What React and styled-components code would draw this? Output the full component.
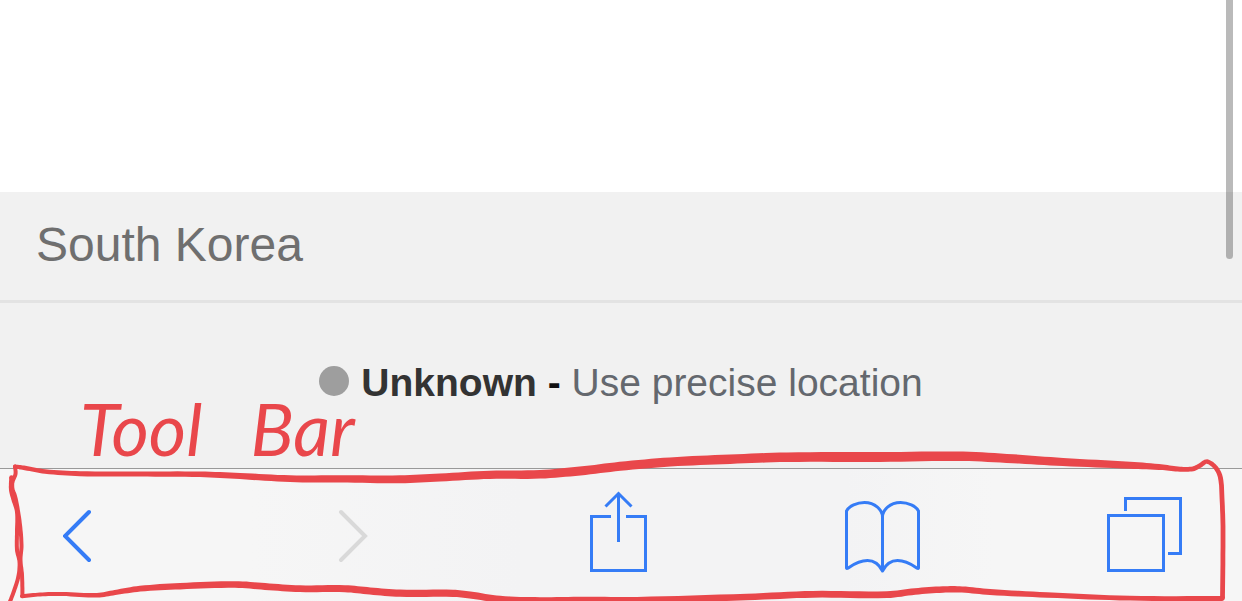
import React from "react";
import styled, { createGlobalStyle } from "styled-components";

const INK = "#e9474b";
const BLUE = "#357cf6";

const GlobalStyle = createGlobalStyle`
  *, *::before, *::after { box-sizing: border-box; }
  body {
    margin: 0;
    background: #fff;
    font-family: "Liberation Sans", Arial, Helvetica, sans-serif;
  }
`;

const Page = styled.div`
  position: relative;
  display: flex;
  flex-direction: column;
  min-height: 100vh;
  overflow: hidden;
`;

const Results = styled.main`
  flex: 1;
`;

const Footer = styled.footer`
  background: #f1f1f1;
`;

const Region = styled.div`
  padding: 25px 36px 27px;
  border-bottom: 3px solid #e3e3e3;
  color: #6f6f6f;
  font-size: 48px;
  line-height: 56px;
`;

const Location = styled.div`
  display: flex;
  align-items: center;
  justify-content: center;
  gap: 12px;
  padding: 56px 36px 61px;
  color: #111;
  font-size: 39px;
  line-height: 48px;
`;

const Dot = styled.span`
  width: 30px;
  height: 30px;
  margin-bottom: 4px;
  border-radius: 50%;
  background: #9e9e9e;
`;

const Place = styled.strong`
  color: #333;
`;

const PreciseLink = styled.a`
  color: #64686e;
  text-decoration: none;
`;

const Toolbar = styled.nav`
  display: grid;
  grid-template-columns: 275fr 252fr 255fr 262fr 76px;
  justify-items: start;
  padding: 22px 59px 28px 63px;
  border-top: 1px solid #999;
  background: linear-gradient(90deg, #f6f6f6 20%, #f3f3f4 42%, #f3f3f4 68%, #f6f6f6 80%);
`;

const ToolButton = styled.button`
  display: block;
  padding: 0;
  border: 0;
  background: none;
  color: ${(p) => (p.disabled ? "#d9d9d9" : BLUE)};
  cursor: ${(p) => (p.disabled ? "default" : "pointer")};

  svg {
    display: block;
    fill: none;
    stroke: currentColor;
    stroke-width: ${(p) => p.$weight || 3}px;
  }
`;

const ScrollThumb = styled.div`
  position: absolute;
  top: -8px;
  right: 9px;
  width: 7px;
  height: 267px;
  border-radius: 4px;
  background: rgba(0, 0, 0, 0.27);
`;

const InkFrame = styled.svg`
  position: absolute;
  left: 0;
  bottom: 0;
  width: 100%;
  height: 161px;
  fill: ${INK};
  pointer-events: none;
`;

const Note = styled.div`
  position: absolute;
  left: 80px;
  bottom: 133px;
  display: flex;
  gap: 48px;
  color: ${INK};
  font-family: Lato, sans-serif;
  font-size: 72px;
  font-style: italic;
  line-height: 80px;
  pointer-events: none;
`;

// Pen strokes as [x, y, thickness] samples.
const STROKES = [
  [
    [15, 26.5, 4], [25, 28, 4.5], [45, 31.5, 4.5], [80, 33.7, 5], [140, 34, 5.2],
    [200, 34.3, 5.6], [240, 36, 6.2], [290, 38.7, 6.8], [340, 38.8, 7.2], [400, 39.3, 8],
    [440, 37.5, 8], [490, 34.8, 8.2], [540, 34.3, 8.6], [580, 31, 8.8], [620, 26.3, 9],
    [670, 22, 9.2], [730, 19.2, 9.4], [787, 17.2, 9.6], [880, 17, 9.8], [963, 16.3, 9.4],
    [1013, 18.8, 9], [1063, 22, 8], [1130, 25.2, 7], [1163, 27.3, 5.6], [1180, 29.2, 5],
    [1193, 28.8, 4.8], [1200, 25.5, 4.6], [1207, 21.5, 4.4], [1216, 28, 4.6],
    [1220.5, 38, 4.8], [1222, 58, 4.8], [1223, 90, 4.8], [1222.500, 158, 4.8],
  ],
  [
    [22, 156.3, 4], [40, 154.500, 4], [62, 154, 4], [97, 155.3, 4.6], [115, 152.500, 5.2],
    [140, 148.7, 5.8], [180, 146.2, 6.4], [235, 144.5, 6.6], [265, 146.500, 6.8],
    [300, 148.7, 6.8], [345, 148.7, 7], [370, 151, 7.2], [400, 153.2, 7.2],
    [453, 153.3, 7.2], [470, 155, 7], [500, 159.2, 6.8], [540, 160.5, 6.6],
    [585, 160, 6.6], [637, 160.2, 6.6], [747, 157, 6.6], [813, 154.3, 6.8],
    [887, 154.7, 6.8], [915, 151.500, 6.6], [943, 149.5, 6.4], [962, 149.5, 6.2],
    [990, 152, 6], [1047, 155, 5.4], [1130, 158.2, 4.8], [1222, 158.500, 4.8],
  ],
  [
    [15, 26.5, 4], [15.500, 34, 4], [12.500, 42, 4], [12.500, 49, 4], [15, 56, 4],
    [17.500, 68, 4], [20, 85, 4], [21.500, 105, 4], [20.500, 120, 4], [22, 135, 4],
    [22.500, 156, 4],
  ],
  [
    [11.500, 37.500, 4.6], [11, 50, 4], [13.500, 60, 4], [17, 72, 4], [17, 92, 4],
    [17, 110, 4], [19.500, 122, 4], [18.500, 136, 4], [14, 151, 4], [9, 164, 4],
  ],
];

function smooth(points, steps = 8) {
  const out = [];
  for (let i = 0; i < points.length - 1; i += 1) {
    const a = points[Math.max(i - 1, 0)];
    const b = points[i];
    const c = points[i + 1];
    const d = points[Math.min(i + 2, points.length - 1)];
    const span = (p, q) => Math.max(Math.hypot(q[0] - p[0], q[1] - p[1]), 1);
    const len = span(b, c);
    const slopeB = (k) => ((c[k] - a[k]) / (span(a, b) * (i > 0) + len)) * len;
    const slopeC = (k) => ((d[k] - b[k]) / (len + span(c, d) * (i < points.length - 2))) * len;
    for (let s = 0; s < steps; s += 1) {
      const t = s / steps;
      const t2 = t * t;
      const t3 = t2 * t;
      out.push([0, 1, 2].map((k) =>
        (2 * t3 - 3 * t2 + 1) * b[k] + (t3 - 2 * t2 + t) * slopeB(k) +
        (3 * t2 - 2 * t3) * c[k] + (t3 - t2) * slopeC(k)));
    }
  }
  out.push(points[points.length - 1]);
  return out;
}

function ribbon(points) {
  const line = smooth(points);
  const left = [];
  const right = [];
  line.forEach(([x, y, w], i) => {
    const p = line[Math.max(i - 1, 0)];
    const n = line[Math.min(i + 1, line.length - 1)];
    const len = Math.hypot(n[0] - p[0], n[1] - p[1]) || 1;
    const nx = (-(n[1] - p[1]) / len) * (w / 2);
    const ny = ((n[0] - p[0]) / len) * (w / 2);
    left.push(`${(x + nx).toFixed(1)},${(y + ny).toFixed(1)}`);
    right.unshift(`${(x - nx).toFixed(1)},${(y - ny).toFixed(1)}`);
  });
  return `M${left.concat(right).join("L")}Z`;
}

function PenFrame() {
  return (
    <InkFrame viewBox="0 0 1242 161" preserveAspectRatio="none" aria-hidden="true">
      {STROKES.map((points, i) => (
        <g key={i}>
          <path d={ribbon(points)} />
          {[points[0], points[points.length - 1]].map(([x, y, w], j) => (
            <circle key={j} cx={x} cy={y} r={w / 2} />
          ))}
        </g>
      ))}
    </InkFrame>
  );
}

export default function App() {
  return (
    <Page>
      <GlobalStyle />
      <Results />
      <Footer>
        <Region>South Korea</Region>
        <Location>
          <Dot />
          <span>
            <Place>Unknown</Place> <b>-</b> <PreciseLink href="#location">Use precise location</PreciseLink>
          </span>
        </Location>
      </Footer>
      <Toolbar aria-label="Browser">
        <ToolButton type="button" aria-label="Back" $weight={4}>
          <svg width="30" height="82" viewBox="0 0 30 82">
            <path d="M26 21 2 45l24 24" strokeLinecap="round" />
          </svg>
        </ToolButton>
        <ToolButton type="button" aria-label="Forward" disabled $weight={4}>
          <svg width="30" height="82" viewBox="0 0 30 82">
            <path d="M3 21l24 24-24 24" strokeLinecap="round" />
          </svg>
        </ToolButton>
        <ToolButton type="button" aria-label="Share">
          <svg width="57" height="82" viewBox="0 0 57 82">
            <path d="M21 25.500H1.500v54h54v-54H36M28.500 51V3" />
            <path d="M15.500 15.500 28.500 2.500l13 13" strokeWidth="3" />
          </svg>
        </ToolButton>
        <ToolButton type="button" aria-label="Bookmarks">
          <svg width="76" height="82" viewBox="0 0 76 82">
            <path
              d="M37.500 26C37.500 19 30 11.500 19.500 11.500C12 11.500 4 15 1.500 20V77Q2 78 4 76.500C9 73 16 69.500 22.500 69.500C30 69.500 34.500 74 37.500 80C40.500 74 45 69.500 52.500 69.500C59 69.500 66 73 71 76.500Q73 78 73.500 77V20C71 15 63 11.500 55.500 11.500C45 11.500 37.500 19 37.500 26V80"
              strokeLinejoin="round"
            />
          </svg>
        </ToolButton>
        <ToolButton type="button" aria-label="Tabs">
          <svg width="76" height="82" viewBox="0 0 76 82">
            <path d="M1.500 24.500h55v55h-55zM18.500 20V7.500h55v55H61" />
          </svg>
        </ToolButton>
      </Toolbar>
      <PenFrame />
      <Note>
        <span>Tool</span>
        <span>Bar</span>
      </Note>
      <ScrollThumb />
    </Page>
  );
}
